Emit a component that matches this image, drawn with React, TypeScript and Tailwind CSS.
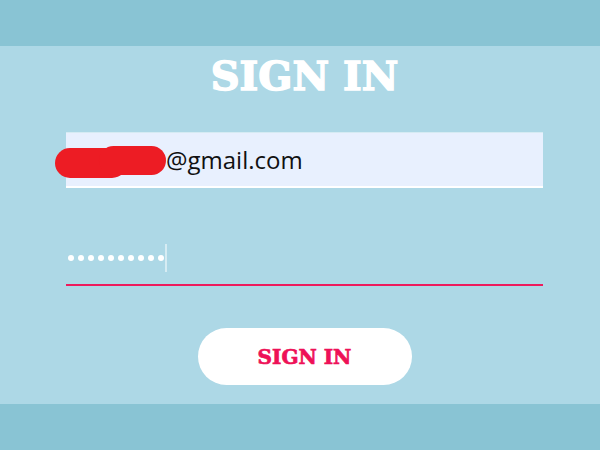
import React from "react";

const Scribble = () => (
  <svg width="112" height="34" viewBox="0 0 112 34" className="absolute left-[-11px] top-[12px]">
    <rect x="0" y="3" width="72" height="30" rx="15" fill="#ed1c24" />
    <rect x="44" y="1" width="67" height="29" rx="14.5" fill="#ed1c24" />
  </svg>
);

const App = () => {
  const dots = [0, 1, 2, 3, 4, 5, 6, 7, 8, 9];
  return (
    <div className="w-[600px] h-[450px] flex flex-col bg-[#add8e6]">
      <div className="h-[46px] bg-[#89c4d4]" />
      <div className="h-[358px] flex flex-col">
        <div className="ml-[66px] w-[477px] flex flex-col">
          <h1 className="mt-[10px] text-center text-white text-[40px] leading-none font-bold font-['DejaVu_Serif',serif] [-webkit-text-stroke:1.5px_#fff]">
            SIGN IN
          </h1>

          {/* email */}
          <div className="relative mt-[36px] h-[56px] bg-[#e8f0fe] border-t border-t-[#d6ebf3] border-b-2 border-b-white flex items-center">
            <Scribble />
            <span className="pl-[100px] text-[24px] leading-none text-[#111] font-['Open_Sans',sans-serif]">
              @gmail.com
            </span>
          </div>

          {/* password */}
          <div className="h-[98px] border-b-2 border-b-[#ee1a5c]">
            <div className="mt-[56px] h-[28px] pl-[2px] flex items-center">
              {dots.map((d) => (
                <span key={d} className={d < 9 ? "w-[6px] h-[6px] rounded-full bg-white mr-[4px]" : "w-[6px] h-[6px] rounded-full bg-white"} />
              ))}
              <span className="ml-[1px] w-[2px] h-[28px] bg-white/50" />
            </div>
          </div>

          <button
            type="button"
            className="mt-[42px] self-center w-[214px] h-[57px] rounded-full bg-white text-[#ee1157] text-[20px] font-bold font-['DejaVu_Serif',serif] [-webkit-text-stroke:0.7px_#ee1157]"
          >
            SIGN IN
          </button>
        </div>
      </div>
      <div className="h-[46px] bg-[#89c4d4]" />
    </div>
  );
};

export default App;
